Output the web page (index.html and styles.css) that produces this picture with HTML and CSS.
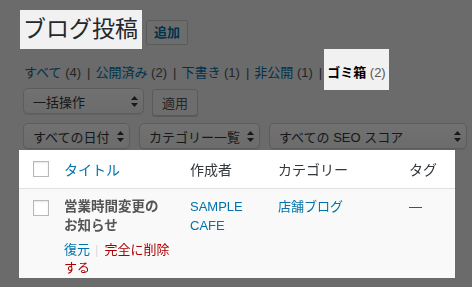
FILE: index.html
```html
<!DOCTYPE html>
<html lang="ja">
<head>
  <meta charset="UTF-8">
  <meta name="viewport" content="width=device-width, initial-scale=1.0">
  <title>ブログ投稿</title>
  <link rel="stylesheet" href="styles.css">
</head>
<body>
  <div class="overlay"></div>
  <div class="wrap">
    <div class="heading">
      <h1 class="page-title spot">ブログ投稿</h1>
      <a class="title-action">追加</a>
    </div>

    <ul class="subsubsub">
      <li><a>すべて <span class="count">(4)</span></a><span class="sep">|</span></li>
      <li><a>公開済み <span class="count">(2)</span></a><span class="sep">|</span></li>
      <li><a>下書き <span class="count">(1)</span></a><span class="sep">|</span></li>
      <li><a>非公開 <span class="count">(1)</span></a><span class="sep">|</span></li>
      <li class="current spot"><a>ゴミ箱 <span class="count">(2)</span></a></li>
    </ul>

    <div class="tablenav">
      <div class="select bulk">一括操作
        <svg width="7" height="11" viewBox="0 0 7 11"><path d="M3.5 0L7 4H0z M3.5 11L0 7h7z" fill="#32373c"/></svg>
      </div>
      <button class="button">適用</button>
    </div>

    <div class="tablenav filters">
      <div class="select date">すべての日付
        <svg width="7" height="11" viewBox="0 0 7 11"><path d="M3.5 0L7 4H0z M3.5 11L0 7h7z" fill="#32373c"/></svg>
      </div>
      <div class="select cat">カテゴリー一覧
        <svg width="7" height="11" viewBox="0 0 7 11"><path d="M3.5 0L7 4H0z M3.5 11L0 7h7z" fill="#32373c"/></svg>
      </div>
      <div class="select seo">すべての SEO スコア
        <svg width="7" height="11" viewBox="0 0 7 11"><path d="M3.5 0L7 4H0z M3.5 11L0 7h7z" fill="#32373c"/></svg>
      </div>
    </div>

    <table class="posts spot">
      <colgroup>
        <col class="col-cb">
        <col class="col-title">
        <col class="col-author">
        <col class="col-cat">
        <col class="col-tag">
      </colgroup>
      <thead>
        <tr>
          <th class="check"><input type="checkbox"></th>
          <th><a class="sort">タイトル</a></th>
          <th>作成者</th>
          <th>カテゴリー</th>
          <th>タグ</th>
        </tr>
      </thead>
      <tbody>
        <tr>
          <td class="check"><input type="checkbox"></td>
          <td>
            <strong class="row-title">営業時間変更のお知らせ</strong>
            <div class="row-actions">
              <a class="untrash">復元</a><span class="bar">|</span><a class="delete">完全に削除する</a>
            </div>
          </td>
          <td><a>SAMPLE CAFE</a></td>
          <td><a>店舗ブログ</a></td>
          <td class="none">—</td>
        </tr>
      </tbody>
    </table>
  </div>
</body>
</html>
```

FILE: styles.css
```css
* {
  margin: 0;
  padding: 0;
  box-sizing: border-box;
}

body {
  font-family: 'Liberation Sans', 'Noto Sans CJK JP', sans-serif;
  font-size: 13px;
  color: #32373c;
  background: #f1f1f1;
  height: 287px;
  overflow: hidden;
}

a {
  color: #0073aa;
  text-decoration: none;
}

/* dim everything except the highlighted parts */
.overlay {
  position: fixed;
  top: 0;
  left: 0;
  right: 0;
  bottom: 0;
  background: rgba(0, 0, 0, 0.555);
  z-index: 1;
}

.spot {
  position: relative;
  z-index: 2;
}

.wrap {
  padding: 10px 0 0 20px;
}

.heading {
  display: flex;
  align-items: flex-start;
}

.page-title {
  font-size: 23px;
  font-weight: 400;
  line-height: 39px;
  height: 39px;
  color: #23282d;
  background: #f1f1f1;
  padding: 0 4px 0 3px;
}

.title-action {
  margin: 10px 0 0 4px;
  height: 25px;
  line-height: 23px;
  padding: 0 7px;
  border: 1px solid #ccc;
  border-radius: 2px;
  background: #f7f7f7;
  font-weight: 600;
}

.subsubsub {
  list-style: none;
  display: flex;
  align-items: center;
  height: 15px;
  line-height: 15px;
  margin: 16px 0 0 4px;
}

.subsubsub li {
  display: flex;
  align-items: center;
}

.subsubsub .count {
  color: #555;
  font-weight: 400;
}

.subsubsub .sep {
  color: #555;
  margin: 0 5px 0 6px;
}

.subsubsub .current {
  background: #f1f1f1;
  padding: 16px 3px 10px;
  margin: -16px 0 -10px -3px;
}

.subsubsub .current a {
  color: #000;
  font-weight: 600;
}

.tablenav {
  display: flex;
  gap: 8px;
  margin: 8px 0 0 3px;
}

.tablenav.filters {
  gap: 9px;
  margin-top: 7px;
}

.select {
  display: flex;
  align-items: center;
  justify-content: space-between;
  height: 26px;
  padding: 0 5px 0 9px;
  border: 1px solid #cfcfcf;
  border-radius: 5px;
  background: linear-gradient(#fff, #f3f3f3);
  box-shadow: 0 1px 1px rgba(0, 0, 0, 0.08);
  color: #32373c;
  white-space: nowrap;
}

.bulk { width: 121px; }
.date { width: 107px; }
.cat { width: 121px; }
.seo { width: 198px; }

.button {
  font-family: inherit;
  font-size: 13px;
  color: #555;
  height: 27px;
  margin-top: 1px;
  padding: 0 9px;
  border: 1px solid #ccc;
  border-radius: 3px;
  background: #f7f7f7;
  box-shadow: 0 1px 0 #ccc;
}

.posts {
  margin: 1px 0 0 -1px;
  width: 436px;
  table-layout: fixed;
  border-collapse: collapse;
}

.col-cb { width: 35px; }
.col-title { width: 126px; }
.col-author { width: 88px; }
.col-cat { width: 131px; }
.col-tag { width: 56px; }

.posts th {
  height: 38px;
  background: #fff;
  border-bottom: 1px solid #e1e1e1;
  font-size: 14px;
  font-weight: 400;
  text-align: left;
  padding: 0 10px;
  vertical-align: middle;
  color: #32373c;
}

.posts td {
  background: #f9f9f9;
  padding: 8px 10px 1px;
  vertical-align: top;
  line-height: 19px;
}

.posts .check {
  padding-left: 14px;
  padding-right: 0;
}

.posts input[type=checkbox] {
  appearance: none;
  display: block;
  width: 16px;
  height: 16px;
  border: 1px solid #b4b9be;
  background: #fff;
  box-shadow: inset 0 1px 2px rgba(0, 0, 0, 0.1);
}

.posts td.check input {
  margin-top: 3px;
}

.posts th.check input {
  margin-top: 1px;
}

.row-title {
  display: block;
  font-size: 13.5px;
  color: #555;
  font-weight: 700;
}

.row-actions {
  margin-top: 6px;
  line-height: 18px;
}

.row-actions .bar {
  color: #ddd;
  margin: 0 6px 0 5px;
}

.row-actions .delete {
  color: #a00;
}

.none {
  color: #32373c;
}
```
